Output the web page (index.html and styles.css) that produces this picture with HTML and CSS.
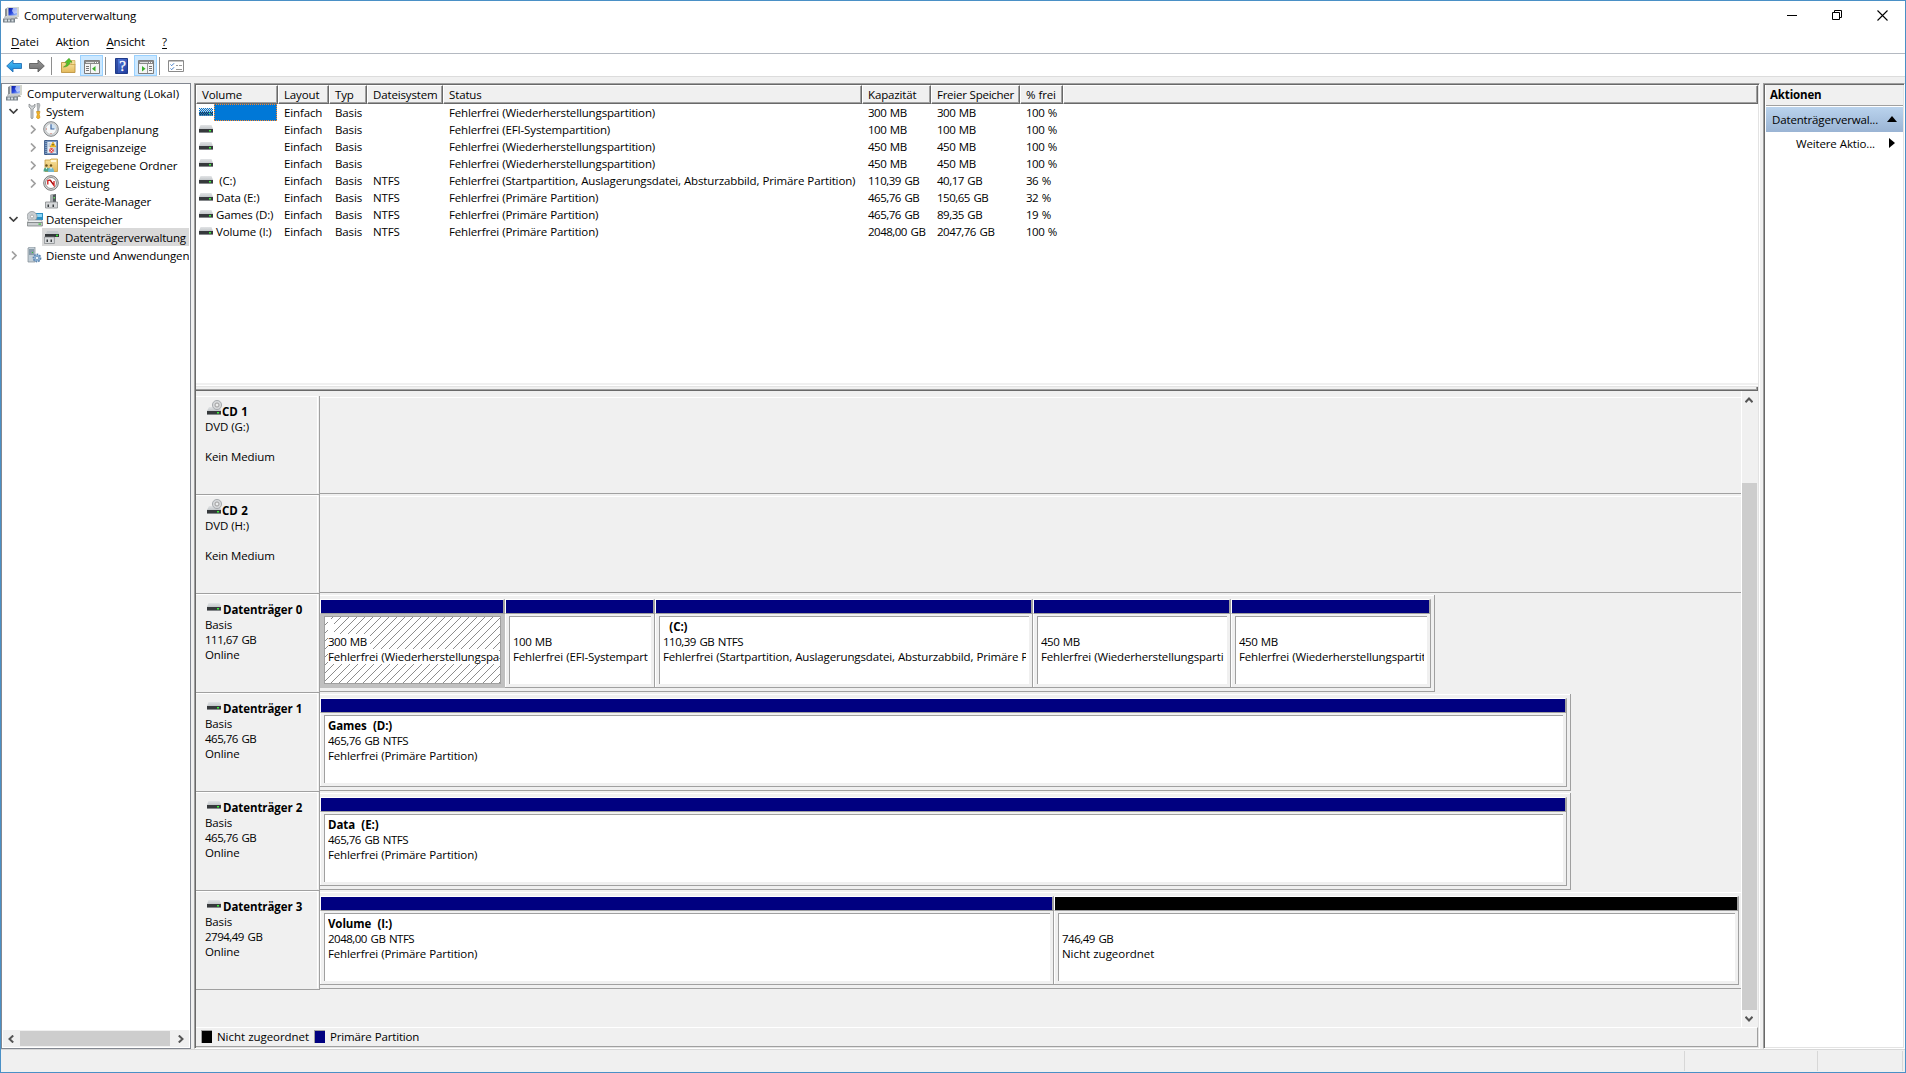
FILE: index.html
```html
<!DOCTYPE html>
<html lang="de">
<head>
<meta charset="utf-8">
<title>Computerverwaltung</title>
<link rel="stylesheet" href="styles.css">
</head>
<body>
<svg class="defs" width="0" height="0" aria-hidden="true">
  <defs>
    <linearGradient id="g-top" x1="0" y1="0" x2="0" y2="1"><stop offset="0" stop-color="#e2e4e6"/><stop offset="1" stop-color="#c3c7ca"/></linearGradient>
    <linearGradient id="g-blue" x1="0" y1="0" x2="0" y2="1"><stop offset="0" stop-color="#4fc3f5"/><stop offset="1" stop-color="#1583d8"/></linearGradient>
    <linearGradient id="g-gray" x1="0" y1="0" x2="0" y2="1"><stop offset="0" stop-color="#9a9a9a"/><stop offset="1" stop-color="#6c6c6c"/></linearGradient>
    <linearGradient id="g-screen" x1="0" y1="0" x2="1" y2="1"><stop offset="0" stop-color="#0818a0"/><stop offset=".5" stop-color="#2a4be0"/><stop offset="1" stop-color="#b5d2ff"/></linearGradient>
    <linearGradient id="g-help" x1="0" y1="0" x2="1" y2="1"><stop offset="0" stop-color="#5a7fe0"/><stop offset="1" stop-color="#1c3a9c"/></linearGradient>
    <linearGradient id="g-fold" x1="0" y1="0" x2="0" y2="1"><stop offset="0" stop-color="#f8e3a0"/><stop offset="1" stop-color="#e3b95b"/></linearGradient>
    <pattern id="p-dots" width="2" height="2" patternUnits="userSpaceOnUse"><path d="M0 0h1v1h-1zM1 1h1v1h-1z" fill="#0078d7"/></pattern>
    <pattern id="p-hatch" width="8" height="8" patternUnits="userSpaceOnUse"><path d="M-1 9L9 -1M-1 1L1 -1M7 9L9 7" stroke="#8c8c8c" stroke-width="1"/></pattern>
    <symbol id="i-disk" viewBox="0 0 14 8"><path d="M1.500 0h11l1.500 4H0z" fill="url(#g-top)"/><path d="M0 4h14v3H0z" fill="#36393c"/><path d="M0 7h14v1H0z" fill="#85888b"/><path d="M10 5h2v1.500h-2z" fill="#3bf03b"/></symbol>
    <symbol id="i-cd" viewBox="0 0 15 15"><path d="M2 7h11l1 4H0z" fill="url(#g-top)"/><circle cx="10" cy="5" r="4.600" fill="#d4d6d8" stroke="#9da1a4" stroke-width=".8"/><circle cx="10" cy="5" r="2" fill="#eceeee" stroke="#999" stroke-width=".9"/><path d="M0 11h14v3H0z" fill="#36393c"/><path d="M0 14h14v1H0z" fill="#85888b"/><path d="M10 12h2v1.500h-2z" fill="#3bf03b"/></symbol>
    <symbol id="i-comp" viewBox="0 0 16 16"><path d="M2 2l2-1v8l-2 1z" fill="#8b9094"/><path d="M4 0h12v10H4z" fill="#d3d6cf"/><path d="M5.500 1h8.500v7.500H5.500z" fill="url(#g-screen)"/><path d="M10 1h4v5l-3 1-2-3z" fill="#dfe9ff" opacity=".7"/><path d="M8 10h6l1 2H8z" fill="#a8aaa6"/><path d="M1 9.500h11v2H1z" fill="#c3c8cb"/><path d="M0 11.500h12v4H0z" fill="#78828a"/><path d="M1.500 12.500h2.500v2H1.500zM5 12.500h2v2H5zM8.500 12.500h2v2h-2z" fill="#d6dde1"/></symbol>
    <symbol id="i-tools" viewBox="0 0 14 16"><path d="M1 1v3l2 2v9q1 1.500 2 0V6l2-2V1L5.500 3h-2z" fill="#cfd2d4" stroke="#7d8184" stroke-width=".7"/><path d="M9 0h2l1 2-1 4v3H9.500V6L9 2z" fill="#b9bcbe" stroke="#85888a" stroke-width=".5"/><path d="M8.500 8.500h3.500l-.8 3 .8 3q-2 2.500-3.500 0l.8-3z" fill="#f2b52a" stroke="#c98a10" stroke-width=".6"/></symbol>
    <symbol id="i-clock" viewBox="0 0 16 16"><circle cx="8" cy="8" r="7.300" fill="#d7d9da" stroke="#808487" stroke-width="1"/><circle cx="8" cy="8" r="5.400" fill="#f7f9fa" stroke="#a9adb0" stroke-width=".6"/><path d="M8 8V2.800A5.200 5.200 0 0 1 13.200 8z" fill="#cfe2f2"/><path d="M8 3.200V8h3.400" fill="none" stroke="#3b64a0" stroke-width="1.200"/><path d="M3 8h1M8 12v1" stroke="#c65" stroke-width="1"/></symbol>
    <symbol id="i-event" viewBox="0 0 14 15"><path d="M.5.500h13v14H.5z" fill="#7c9cc4" stroke="#4a6896"/><path d="M2 0v15" stroke="#27436e" stroke-dasharray="1 1"/><path d="M3.500 2h8.500v11H3.500z" fill="#e8edf3"/><path d="M4.500 4h2M4.500 6h2M10 9h2M10 11h2" stroke="#8da1bb" stroke-width=".8"/><path d="M9 2l3 5H6z" fill="#ffc928" stroke="#c08a00" stroke-width=".5"/><path d="M9 4v1.500" stroke="#222"/><circle cx="7.500" cy="10.500" r="2.400" fill="#e05050"/><path d="M6.500 9.500l2 2m0-2l-2 2" stroke="#fff" stroke-width=".8"/></symbol>
    <symbol id="i-share" viewBox="0 0 16 15"><path d="M2 2h5l1-1h6.500v12.500H2z" fill="url(#g-fold)" stroke="#c39a3e" stroke-width=".8"/><path d="M8 2h5v2H8z" fill="#fff6d8"/><circle cx="3.500" cy="7.500" r="1.200" fill="#6b531c"/><circle cx="8" cy="7.500" r="1.200" fill="#6b531c"/><path d="M.5 13.500q0-4 3-4t3 4z" fill="#4aa58b"/><path d="M5 14q0-4.500 3-4.500t3 4.500z" fill="#6fb8d0"/><path d="M2.500 9.500l1 2 1-2M7 9.500l1 2 1-2" fill="#fff"/></symbol>
    <symbol id="i-perf" viewBox="0 0 16 16"><circle cx="8" cy="8" r="7.300" fill="#ddd" stroke="#777" stroke-width="1"/><circle cx="8" cy="8" r="5.500" fill="#fff" stroke="#777" stroke-width=".8"/><path d="M4.800 9.500V5.500L7 5l4 5.500V6" fill="none" stroke="#d01818" stroke-width="1.300"/><path d="M7.500 5l2.500 4" stroke="#7a1010" stroke-width=".8"/></symbol>
    <symbol id="i-dev" viewBox="0 0 13 15"><path d="M5 1l6-1v8H5z" fill="#54595d"/><path d="M5 1l3-1v8H5z" fill="#a6abae"/><path d="M8.500 3h1.500v1.500H8.500z" fill="#6bdc6b"/><path d="M.5 8h12v6H.5z" fill="#d5d7d9" stroke="#85898c" stroke-width=".8"/><path d="M2.500 10.500h1.500v2.500H2.500zM7.500 10.500h1.500v2.500H7.500z" fill="#3c4043"/></symbol>
    <symbol id="i-store" viewBox="0 0 16 16"><path d="M8 2h8v7H8z" fill="#2a8fc4"/><path d="M9 3h6v3H9z" fill="#8cd4f4"/><circle cx="5" cy="5.500" r="5" fill="#c9cdd0" stroke="#8a8f92" stroke-width=".7"/><circle cx="5" cy="5.500" r="1.500" fill="#fff" stroke="#888" stroke-width=".6"/><path d="M1.500 9h13l1 2.500H.5z" fill="#eceeef" stroke="#8d9194" stroke-width=".6"/><path d="M.4 11.500h15v3.500H.4z" fill="#c9cdcf" stroke="#6f7476" stroke-width=".7"/><path d="M11.500 12.500h2.500v1.200h-2.500z" fill="#35c035"/></symbol>
    <symbol id="i-dmgmt" viewBox="0 0 15 13"><path d="M3 0h11l1 3H2z" fill="#c6cacd"/><path d="M1 3h14v3H1z" fill="#34373a"/><path d="M12 3.700h2v1.600h-2z" fill="#35e835"/><path d="M.4 6h10v6.500H.4z" fill="#d9dbdd" stroke="#7e8285" stroke-width=".7"/><path d="M2.500 8.500h1.500v2.500H2.500zM6.500 8.500h1.500v2.500H6.500z" fill="#3c4043"/></symbol>
    <symbol id="i-serv" viewBox="0 0 15 16"><path d="M1 1l2-1h5v15H1z" fill="#c3ced6" stroke="#7b8891" stroke-width=".7"/><path d="M2 3h5M2 5h5M2 7h5" stroke="#4f6b7d" stroke-width="1"/><path d="M5 5h1v1H5z" fill="#3c3"/><circle cx="10" cy="11" r="3.600" fill="#8fb4d8" stroke="#5b84ad" stroke-width="1.600" stroke-dasharray="1.600 1.100"/><circle cx="10" cy="11" r="1.600" fill="#f4f8fb" stroke="#5b84ad" stroke-width=".6"/></symbol>
    <symbol id="i-right" viewBox="0 0 6 9"><path d="M1 .5l4 4-4 4" fill="none" stroke="#a0a0a0" stroke-width="1.700"/></symbol>
    <symbol id="i-down" viewBox="0 0 9 6"><path d="M.5 1l4 4 4-4" fill="none" stroke="#404040" stroke-width="1.700"/></symbol>
    <symbol id="i-arr" viewBox="0 0 8 6"><path d="M.5 5.200L4 1.500l3.500 3.700" fill="none" stroke="#555" stroke-width="2"/></symbol>
  </defs>
</svg>

<div class="window">
  <header class="titlebar">
    <svg class="app-icon" width="16" height="16"><use href="#i-comp"/></svg>
    <span class="title">Computerverwaltung</span>
    <div class="controls">
      <svg width="10" height="10" viewBox="0 0 10 10"><path d="M0 5.500h10" stroke="#000"/></svg>
      <svg width="10" height="10" viewBox="0 0 10 10"><path d="M.5 2.500h7v7h-7zM2.500 2.500v-2h7v7h-2" fill="none" stroke="#000"/></svg>
      <svg width="11" height="11" viewBox="0 0 11 11"><path d="M.5.500l10 10M10.500.500l-10 10" stroke="#000" stroke-width="1.100"/></svg>
    </div>
  </header>

  <nav class="menubar">
    <span><u>D</u>atei</span><span>Ak<u>t</u>ion</span><span><u>A</u>nsicht</span><span><u>?</u></span>
  </nav>

  <div class="toolbar">
    <svg class="nav-back" width="16" height="14" viewBox="0 0 16 14"><path d="M.7 7L7 1v3.500h8.500v5H7V13z" fill="url(#g-blue)" stroke="#2571b5" stroke-width=".9"/></svg>
    <svg class="nav-fwd" width="16" height="14" viewBox="0 0 16 14"><path d="M15.300 7L9 1v3.500H.5v5H9V13z" fill="url(#g-gray)" stroke="#5f5f5f" stroke-width=".9"/></svg>
    <i class="sep"></i>
    <svg class="up" width="15" height="15" viewBox="0 0 15 15"><path d="M.5 4.500h4l1 1.500h8.500v8.500H.5z" fill="url(#g-fold)" stroke="#bd9442" stroke-width=".9"/><path d="M10 2.500h4v4h-4z" fill="#f5dc95" stroke="#c39a3e" stroke-width=".6"/><path d="M2.500 9q3-1 3.500-4.500L4 4.300 8 .3l3 3.900-2-.1Q8 9 2.500 9z" fill="#55c228" stroke="#2f8a12" stroke-width=".5"/></svg>
    <span class="tb-on"><svg width="16" height="14" viewBox="0 0 16 14"><path d="M.5.500h15v13H.5z" fill="#f5f5f5" stroke="#7d7d7d"/><path d="M1 1h14v3H1z" fill="#8a8a8a"/><path d="M2 2.500h8" stroke="#ddd"/><path d="M11 2.500h3" stroke="#fff" stroke-dasharray="1 1"/><path d="M6.500 4v9" stroke="#999"/><path d="M2 6.500h3M2 8.500h3M2 10.500h3" stroke="#777"/><path d="M11.500 6v5.500L8 8.700z" fill="#3aae2a"/></svg></span>
    <i class="sep"></i>
    <svg class="help" width="13" height="16" viewBox="0 0 13 16"><path d="M.5.500h12v15H.5z" fill="url(#g-help)" stroke="#1f3a8a"/><path d="M2 1v14" stroke="#16307c"/><text x="7.500" y="13" font-size="15" font-family="Liberation Serif, serif" text-anchor="middle" fill="#fff" stroke="#fff" stroke-width=".3">?</text></svg>
    <span class="tb-on"><svg width="16" height="14" viewBox="0 0 16 14"><path d="M.5.500h15v13H.5z" fill="#f5f5f5" stroke="#7d7d7d"/><path d="M1 1h14v3H1z" fill="#8a8a8a"/><path d="M2 2.500h8" stroke="#ddd"/><path d="M11 2.500h3" stroke="#fff" stroke-dasharray="1 1"/><path d="M9.500 4v9" stroke="#999"/><path d="M11 6.500h3M11 8.500h3M11 10.500h3" stroke="#777"/><path d="M4 6v5.500l3.500-2.800z" fill="#3aae2a"/></svg></span>
    <i class="sep"></i>
    <svg class="props" width="16" height="12" viewBox="0 0 16 12"><path d="M.5.500h15v11H.5z" fill="#fff" stroke="#8a8a8a"/><path d="M1 1h14v1H1z" fill="#c4c4c4"/><path d="M2.500 4.500l1.200 1.200L6 3.300M2.500 8.500l1.200 1.200L6 7.300" fill="none" stroke="#3a78c8"/><path d="M8 5.500h2M11 5.500h3M8 9.500h6" stroke="#999"/></svg>
  </div>

  <main class="workspace">
    <aside class="tree-pane">
      <ul class="tree">
        <li class="l0"><svg width="16" height="16"><use href="#i-comp"/></svg><span>Computerverwaltung (Lokal)</span></li>
        <li class="l1"><svg class="ex" width="9" height="6"><use href="#i-down"/></svg><svg class="ic" width="14" height="16"><use href="#i-tools"/></svg><span>System</span></li>
        <li class="l2"><svg class="ex" width="6" height="9"><use href="#i-right"/></svg><svg class="ic" width="16" height="16"><use href="#i-clock"/></svg><span>Aufgabenplanung</span></li>
        <li class="l2"><svg class="ex" width="6" height="9"><use href="#i-right"/></svg><svg class="ic" width="14" height="15"><use href="#i-event"/></svg><span>Ereignisanzeige</span></li>
        <li class="l2"><svg class="ex" width="6" height="9"><use href="#i-right"/></svg><svg class="ic" width="16" height="15"><use href="#i-share"/></svg><span>Freigegebene Ordner</span></li>
        <li class="l2"><svg class="ex" width="6" height="9"><use href="#i-right"/></svg><svg class="ic" width="16" height="16"><use href="#i-perf"/></svg><span>Leistung</span></li>
        <li class="l2"><i class="ex"></i><svg class="ic" width="13" height="15"><use href="#i-dev"/></svg><span>Geräte-Manager</span></li>
        <li class="l1"><svg class="ex" width="9" height="6"><use href="#i-down"/></svg><svg class="ic" width="16" height="16"><use href="#i-store"/></svg><span>Datenspeicher</span></li>
        <li class="l2 selected"><i class="ex"></i><svg class="ic" width="15" height="13"><use href="#i-dmgmt"/></svg><span>Datenträgerverwaltung</span></li>
        <li class="l1"><svg class="ex" width="6" height="9"><use href="#i-right"/></svg><svg class="ic" width="15" height="16"><use href="#i-serv"/></svg><span>Dienste und Anwendungen</span></li>
      </ul>
      <div class="hscroll">
        <svg width="6" height="8" viewBox="0 0 6 8"><path d="M5.200.500L1.500 4l3.700 3.500" fill="none" stroke="#555" stroke-width="2"/></svg>
        <i class="thumb"></i>
        <svg width="6" height="8" viewBox="0 0 6 8"><path d="M.8.500L4.500 4 .8 7.500" fill="none" stroke="#555" stroke-width="2"/></svg>
      </div>
    </aside>

    <section class="center-pane">
      <div class="volumes">
        <div class="vrow head"><span>Volume</span><span>Layout</span><span>Typ</span><span>Dateisystem</span><span>Status</span><span>Kapazität</span><span>Freier Speicher</span><span>% frei</span><span></span></div>
        <div class="vrow"><span class="name"><svg width="14" height="8"><use href="#i-disk"/><path d="M0 0h14v8H0z" fill="url(#p-dots)"/></svg><b class="sel"></b></span><span>Einfach</span><span>Basis</span><span></span><span>Fehlerfrei (Wiederherstellungspartition)</span><span class="num">300 MB</span><span class="num">300 MB</span><span class="num">100 %</span></div>
        <div class="vrow"><span class="name"><svg width="14" height="8"><use href="#i-disk"/></svg></span><span>Einfach</span><span>Basis</span><span></span><span>Fehlerfrei (EFI-Systempartition)</span><span class="num">100 MB</span><span class="num">100 MB</span><span class="num">100 %</span></div>
        <div class="vrow"><span class="name"><svg width="14" height="8"><use href="#i-disk"/></svg></span><span>Einfach</span><span>Basis</span><span></span><span>Fehlerfrei (Wiederherstellungspartition)</span><span class="num">450 MB</span><span class="num">450 MB</span><span class="num">100 %</span></div>
        <div class="vrow"><span class="name"><svg width="14" height="8"><use href="#i-disk"/></svg></span><span>Einfach</span><span>Basis</span><span></span><span>Fehlerfrei (Wiederherstellungspartition)</span><span class="num">450 MB</span><span class="num">450 MB</span><span class="num">100 %</span></div>
        <div class="vrow"><span class="name"><svg width="14" height="8"><use href="#i-disk"/></svg>&nbsp;(C:)</span><span>Einfach</span><span>Basis</span><span>NTFS</span><span>Fehlerfrei (Startpartition, Auslagerungsdatei, Absturzabbild, Primäre Partition)</span><span class="num">110,39 GB</span><span class="num">40,17 GB</span><span class="num">36 %</span></div>
        <div class="vrow"><span class="name"><svg width="14" height="8"><use href="#i-disk"/></svg>Data (E:)</span><span>Einfach</span><span>Basis</span><span>NTFS</span><span>Fehlerfrei (Primäre Partition)</span><span class="num">465,76 GB</span><span class="num">150,65 GB</span><span class="num">32 %</span></div>
        <div class="vrow"><span class="name"><svg width="14" height="8"><use href="#i-disk"/></svg>Games (D:)</span><span>Einfach</span><span>Basis</span><span>NTFS</span><span>Fehlerfrei (Primäre Partition)</span><span class="num">465,76 GB</span><span class="num">89,35 GB</span><span class="num">19 %</span></div>
        <div class="vrow"><span class="name"><svg width="14" height="8"><use href="#i-disk"/></svg>Volume (I:)</span><span>Einfach</span><span>Basis</span><span>NTFS</span><span>Fehlerfrei (Primäre Partition)</span><span class="num">2048,00 GB</span><span class="num">2047,76 GB</span><span class="num">100 %</span></div>
      </div>
      <div class="splitter"></div>

      <div class="disk-area">
        <div class="disks">
          <div class="disk">
            <div class="info cd"><h3><svg width="15" height="15"><use href="#i-cd"/></svg>CD 1</h3><p>DVD (G:)</p><p>&nbsp;</p><p>Kein Medium</p></div>
            <div class="media empty"></div>
          </div>
          <div class="disk">
            <div class="info cd"><h3><svg width="15" height="15"><use href="#i-cd"/></svg>CD 2</h3><p>DVD (H:)</p><p>&nbsp;</p><p>Kein Medium</p></div>
            <div class="media empty"></div>
          </div>
          <div class="disk">
            <div class="info"><h3><svg width="14" height="8"><use href="#i-disk"/></svg>Datenträger 0</h3><p>Basis</p><p class="num">111,67 GB</p><p>Online</p></div>
            <div class="media" style="width:1115px">
              <div class="part active" style="width:185px"><div class="band"></div><div class="body"><div class="inner"><svg class="hatch" width="100%" height="100%"><rect width="100%" height="100%" fill="url(#p-hatch)"/></svg><p><span>&nbsp;&nbsp;</span></p><p><span class="num">300 MB&nbsp;</span></p><p><span>Fehlerfrei (Wiederherstellungspa</span></p></div></div></div>
              <div class="part" style="width:150px"><div class="band"></div><div class="body"><div class="inner"><p>&nbsp;</p><p class="num">100 MB</p><p>Fehlerfrei (EFI-Systempart</p></div></div></div>
              <div class="part" style="width:378px"><div class="band"></div><div class="body"><div class="inner"><p class="vol">&nbsp; (C:)</p><p class="num">110,39 GB NTFS</p><p>Fehlerfrei (Startpartition, Auslagerungsdatei, Absturzabbild, Primäre Partition)</p></div></div></div>
              <div class="part" style="width:198px"><div class="band"></div><div class="body"><div class="inner"><p>&nbsp;</p><p class="num">450 MB</p><p>Fehlerfrei (Wiederherstellungsparti</p></div></div></div>
              <div class="part" style="width:200px"><div class="band"></div><div class="body"><div class="inner"><p>&nbsp;</p><p class="num">450 MB</p><p>Fehlerfrei (Wiederherstellungspartit</p></div></div></div>
            </div>
          </div>
          <div class="disk">
            <div class="info"><h3><svg width="14" height="8"><use href="#i-disk"/></svg>Datenträger 1</h3><p>Basis</p><p class="num">465,76 GB</p><p>Online</p></div>
            <div class="media" style="width:1251px">
              <div class="part" style="width:1247px"><div class="band"></div><div class="body"><div class="inner"><p class="vol">Games&nbsp; (D:)</p><p class="num">465,76 GB NTFS</p><p>Fehlerfrei (Primäre Partition)</p></div></div></div>
            </div>
          </div>
          <div class="disk">
            <div class="info"><h3><svg width="14" height="8"><use href="#i-disk"/></svg>Datenträger 2</h3><p>Basis</p><p class="num">465,76 GB</p><p>Online</p></div>
            <div class="media" style="width:1251px">
              <div class="part" style="width:1247px"><div class="band"></div><div class="body"><div class="inner"><p class="vol">Data&nbsp; (E:)</p><p class="num">465,76 GB NTFS</p><p>Fehlerfrei (Primäre Partition)</p></div></div></div>
            </div>
          </div>
          <div class="disk">
            <div class="info"><h3><svg width="14" height="8"><use href="#i-disk"/></svg>Datenträger 3</h3><p>Basis</p><p class="num">2794,49 GB</p><p>Online</p></div>
            <div class="media full">
              <div class="part" style="width:734px"><div class="band"></div><div class="body"><div class="inner"><p class="vol">Volume&nbsp; (I:)</p><p class="num">2048,00 GB NTFS</p><p>Fehlerfrei (Primäre Partition)</p></div></div></div>
              <div class="part free" style="width:685px"><div class="band"></div><div class="body"><div class="inner"><p>&nbsp;</p><p class="num">746,49 GB</p><p class="wide">Nicht zugeordnet</p></div></div></div>
            </div>
          </div>
        </div>
        <div class="vscroll">
          <svg width="8" height="6"><use href="#i-arr"/></svg>
          <i class="thumb"></i>
          <svg class="flip" width="8" height="6"><use href="#i-arr"/></svg>
        </div>
      </div>
      <div class="legend"><i class="swatch black"></i><span>Nicht zugeordnet</span><i class="swatch navy"></i><span class="tight">Primäre Partition</span></div>
    </section>

    <aside class="actions-pane">
      <h2>Aktionen</h2>
      <div class="group"><span>Datenträgerverwal...</span><svg width="10" height="6" viewBox="0 0 10 6"><path d="M0 6l5-6 5 6z"/></svg></div>
      <div class="more"><span>Weitere Aktio...</span><svg width="6" height="10" viewBox="0 0 6 10"><path d="M0 0l6 5-6 5z"/></svg></div>
    </aside>
  </main>

  <footer class="statusbar"><i></i><i></i><i></i></footer>
</div>
</body>
</html>
```
FILE: styles.css
```css
* { box-sizing: border-box; }
body {
  margin: 0;
  font: 11.5px/15px "Open Sans", "Noto Sans", sans-serif;
  letter-spacing: -0.14px;
  word-spacing: 0.3px;
  color: #000;
}
h2, h3, p, ul { margin: 0; padding: 0; font-size: inherit; }
svg { display: block; flex: none; }
u { text-underline-offset: 2px; }
.defs { position: absolute; }
.num { letter-spacing: -0.5px; word-spacing: 1.1px; }

.window {
  width: 1906px;
  height: 1073px;
  border: 1px solid #4a90c6;
  background: #f0f0f0;
  display: flex;
  flex-direction: column;
  overflow: hidden;
}

/* Title, menu and tool bars */
.titlebar {
  height: 29px;
  background: #fff;
  display: flex;
  align-items: center;
  padding: 0 17px 1px 2px;
}
.title { margin-left: 5px; letter-spacing: -0.09px; }
.controls { margin-left: auto; display: flex; align-items: center; gap: 35px; }
.menubar {
  height: 24px;
  background: #fff;
  border-bottom: 1px solid #b4b9c1;
  display: flex;
  padding: 4px 0 0 10px;
  gap: 17px;
  letter-spacing: -0.1px;
}
.toolbar {
  height: 23px;
  background: #fff;
  border-bottom: 1px solid #dcdcdc;
  display: flex;
  align-items: center;
  padding: 1px 0 0 5px;
}
.nav-fwd { margin-left: 7px; }
.sep { width: 1px; height: 18px; background: #8e8e8e; margin-left: 6px; }
.up { margin-left: 9px; }
.tb-on {
  width: 23px;
  height: 21px;
  margin-left: 4px;
  background: #cce8ff;
  border: 1px solid #99d1ff;
  display: grid;
  place-items: center;
}
.tb-on svg { margin-top: 3px; }
.tb-on + .sep { margin-left: 2px; }
.help { margin-left: 9px; }
.help + .tb-on { margin-left: 6px; }
.props { margin-left: 8px; }

/* Panes */
.workspace { height: 972px; padding-top: 6px; display: flex; }
.tree-pane {
  width: 190px;
  background: #fff;
  border: 1px solid #828790;
  display: flex;
  flex-direction: column;
  justify-content: space-between;
}
.center-pane, .actions-pane {
  border: 1px solid;
  border-color: #a0a0a0 #fff #fff #a0a0a0;
  box-shadow: inset 1px 1px #696969, inset -1px -1px #e3e3e3;
  padding: 1px;
}

/* Tree */
.tree { list-style: none; overflow: hidden; width: 187px; }
.tree li { height: 18px; display: flex; align-items: center; white-space: nowrap; letter-spacing: -0.12px; }
.tree li svg { overflow: visible; }
.tree .l0 { padding-left: 4px; gap: 5px; letter-spacing: 0; }
.tree .l1, .tree .l2 { display: grid; align-items: center; }
.tree .l1 { padding-left: 2px; grid-template-columns: 19px 23px 1fr; }
.tree .l2 { padding-left: 23px; grid-template-columns: 16px 24px 1fr; }
.tree .ex, .tree .ic { justify-self: center; }
.tree .l2 .ic { margin-left: -4px; }
.tree .selected {
  margin-left: 40px;
  padding-left: 0;
  grid-template-columns: 23px 1fr;
  background: #d9d9d9;
  letter-spacing: -0.17px;
}
.tree .selected i { display: none; }
.hscroll {
  height: 17px;
  margin: 0 1px 1px;
  background: #f0f0f0;
  display: flex;
  align-items: center;
  padding: 0 5px;
  gap: 6px;
}
.hscroll .thumb { width: 150px; height: 15px; background: #cdcdcd; }
.hscroll svg:last-child { margin-left: 2px; }

/* Volume list */
.center-pane { margin-left: 3px; width: 1566px; display: flex; flex-direction: column; }
.volumes { height: 298px; background: #fff; }
.vrow {
  display: grid;
  grid-template-columns: 82px 51px 38px 76px 419px 69px 89px 43px 1fr;
  height: 17px;
  line-height: 17px;
  white-space: nowrap;
}
.vrow > span { padding-left: 6px; }
.vrow .name { padding-left: 3px; display: flex; align-items: center; gap: 3px; }
.vrow .name svg { margin-top: -1px; }
.vrow .sel { flex: 1; height: 17px; margin: 0 1px 0 -2px; background: #0078d7; border: 1px dotted #ff8728; }
.vrow.head { height: 19px; }
.vrow.head > span {
  background: #f0f0f0;
  border: 1px solid;
  border-color: #fff #696969 #696969 #fff;
  box-shadow: inset -1px -1px #a0a0a0;
  padding-left: 5px;
}
.vrow.head > span:nth-child(7) { letter-spacing: -0.26px; }
.splitter {
  height: 8px;
  background: #f0f0f0;
  border-top: 2px solid #f0f0f0;
  box-shadow: inset 0 1px #fff, inset 0 2px #e3e3e3, inset -1px -1px #696969, inset -2px -2px #a0a0a0;
}

/* Disk view */
.disk-area { flex: 1; display: flex; min-height: 0; }
.disks { width: 1546px; padding-top: 5px; border-right: 1px solid #fff; }
.disk { height: 99px; display: flex; }
.info {
  width: 124px;
  border-right: 1px solid #a0a0a0;
  padding: 7px 0 0 9px;
  background:
    linear-gradient(#fff, #fff) 0 0 / 122px 1px no-repeat,
    linear-gradient(#a0a0a0, #a0a0a0) 0 98px / 123px 1px no-repeat,
    linear-gradient(#fff, #fff) 121px 0 / 1px 97px no-repeat;
}
.info h3 { display: flex; height: 16px; align-items: center; gap: 2px; padding: 0 0 0 2px; letter-spacing: -0.08px; white-space: nowrap; }
.info h3 svg { margin-top: -5px; }
.info.cd h3 { gap: 0; letter-spacing: 0; }
.info.cd h3 svg { margin-top: -7px; }
.media {
  height: 97px;
  margin-top: 1px;
  border: solid #a0a0a0;
  border-width: 0 1px 1px 0;
  box-shadow: inset 0 1px #fff;
  padding-top: 4px;
  display: flex;
}
.media.empty, .media.full { width: 1421px; border-right: 0; }
.part { height: 89px; }
.band {
  height: 15px;
  background: #000080;
  border: solid;
  border-width: 1px 2px 1px 1px;
  border-color: #fff #a0a0a0 #a0a0a0 #fff;
}
.free .band { background: #000; }
.body {
  height: 74px;
  border: solid #a0a0a0;
  border-width: 0 1px 1px 0;
  box-shadow: inset 1px 0 #fff;
  padding: 2px 3px 3px 4px;
}
.inner {
  height: 68px;
  background: #fff;
  border: solid #a0a0a0;
  border-width: 1px 0 0 1px;
  padding: 2px 3px 0 3px;
  overflow: hidden;
}
.inner p { overflow: hidden; white-space: nowrap; }
.inner .vol { font-weight: 700; letter-spacing: -0.1px; }
.inner .wide { letter-spacing: -0.04px; }
.active .body { background: #c0c0c0; border-color: #c0c0c0; box-shadow: none; }
.active .inner { border-width: 1px; padding-right: 1px; display: grid; grid-auto-rows: 15px; position: relative; }
.active .inner p { position: relative; }
.active .inner p span { display: inline-block; background: #fff; }
.hatch { position: absolute; inset: 0; }
.vscroll { width: 16px; display: flex; flex-direction: column; align-items: center; padding: 6px 1px 5px 0; }
.vscroll svg { margin-right: 1px; }
.vscroll .thumb { width: 15px; height: 527px; margin: 80px 0 6px; background: #cdcdcd; }
.flip { transform: scaleY(-1); }
.legend {
  height: 20px;
  border: solid;
  border-width: 1px 1px 1px 0;
  border-color: #fff #a0a0a0 #a0a0a0;
  display: flex;
  align-items: center;
  padding: 0 0 1px 5px;
  letter-spacing: -0.06px;
}
.legend .tight { letter-spacing: -0.16px; }
.swatch { width: 11px; height: 13px; border: solid #a0a0a0; border-width: 1px 0 0 1px; margin-right: 5px; }
.black { background: #000; }
.navy { background: #000080; margin-left: 5px; }

/* Actions */
.actions-pane { margin-left: 3px; width: 142px; background: #fff; }
.actions-pane h2 { height: 21px; background: #f0f0f0; border-bottom: 1px solid #a0a0a0; margin: 0 0 1px 1px; padding: 2px 0 0 4px; }
.group, .more { display: flex; align-items: center; justify-content: space-between; letter-spacing: -0.15px; }
.group { height: 25px; margin-left: 1px; padding: 0 6px 1px 6px; background: linear-gradient(#bad3ed, #9ab4d4); }
.more { height: 22px; padding: 0 8px 0 31px; }

.statusbar { height: 23px; border-top: 1px solid #d7d7d7; display: grid; grid-template-columns: 133px 85px 1px; padding: 1px 0 1px 1683px; }
.statusbar i { width: 1px; background: #d7d7d7; }
```
